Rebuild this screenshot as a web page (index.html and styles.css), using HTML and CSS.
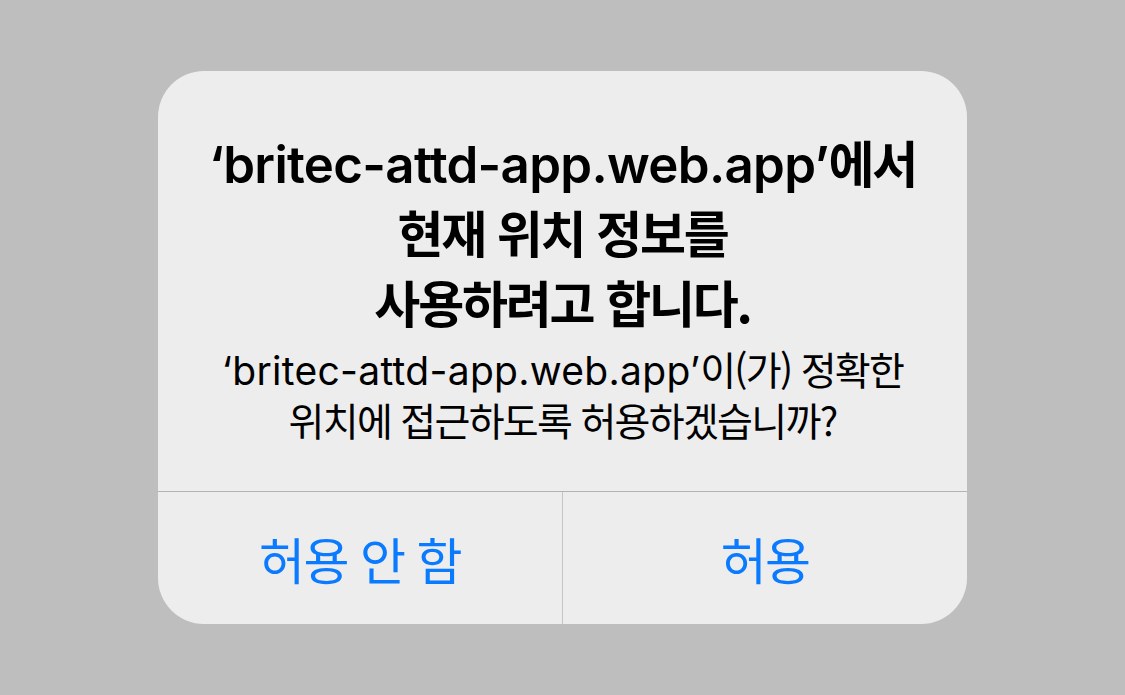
FILE: index.html
```html
<!DOCTYPE html>
<html lang="ko">
<head>
<meta charset="utf-8">
<link rel="stylesheet" href="styles.css">
</head>
<body>
<div class="stage">
  <div class="alert">
    <div class="content">
      <h1 class="title">‘britec-attd-app.web.app’<span class="ko">에서</span><br><span class="ko">현재 위치 정보를</span><br><span class="ko">사용하려고 합니다.</span></h1>
      <p class="message">‘britec-attd-app.web.app’<span class="ko">이(가) 정확한</span><br><span class="ko">위치에 접근하도록 허용하겠습니까?</span></p>
    </div>
    <div class="actions">
      <button class="action">허용 안 함</button>
      <button class="action">허용</button>
    </div>
  </div>
</div>
</body>
</html>
```

FILE: styles.css
```css
html, body {
  margin: 0;
  padding: 0;
  height: 100%;
}
body {
  background: #bebebe;
  font-family: Inter, "Noto Sans CJK KR", sans-serif;
}
.stage {
  height: 100%;
  display: flex;
  align-items: center;
  justify-content: center;
}
.alert {
  width: 809px;
  height: 553px;
  background: #ededed;
  border-radius: 46px;
  overflow: hidden;
  display: flex;
  flex-direction: column;
}
.content {
  flex: 1;
  padding: 57px 20px 0;
  text-align: center;
  color: #000;
}
.ko {
  font-family: "Noto Sans CJK KR", sans-serif;
}
.title {
  margin: 0;
  font-size: 51px;
  font-weight: 600;
  line-height: 66px;
  letter-spacing: -0.7px;
  white-space: nowrap;
}
.title .ko {
  font-size: 50px;
  font-weight: 700;
  letter-spacing: -2.2px;
}
.message {
  margin: 6px 0 0;
  font-size: 39px;
  font-weight: 400;
  line-height: 48px;
  letter-spacing: 0.3px;
  white-space: nowrap;
}
.message .ko {
  font-size: 39px;
  letter-spacing: -1.7px;
}
.actions {
  height: 132px;
  border-top: 1px solid #b3b3b3;
  display: flex;
}
.action {
  flex: 1;
  border: 0;
  background: transparent;
  color: #0a7aff;
  font-family: "Noto Sans CJK KR", sans-serif;
  font-size: 50px;
  font-weight: 400;
  letter-spacing: -1.7px;
  padding: 0;
}
.action + .action {
  border-left: 1px solid #c4c4c4;
}
```
